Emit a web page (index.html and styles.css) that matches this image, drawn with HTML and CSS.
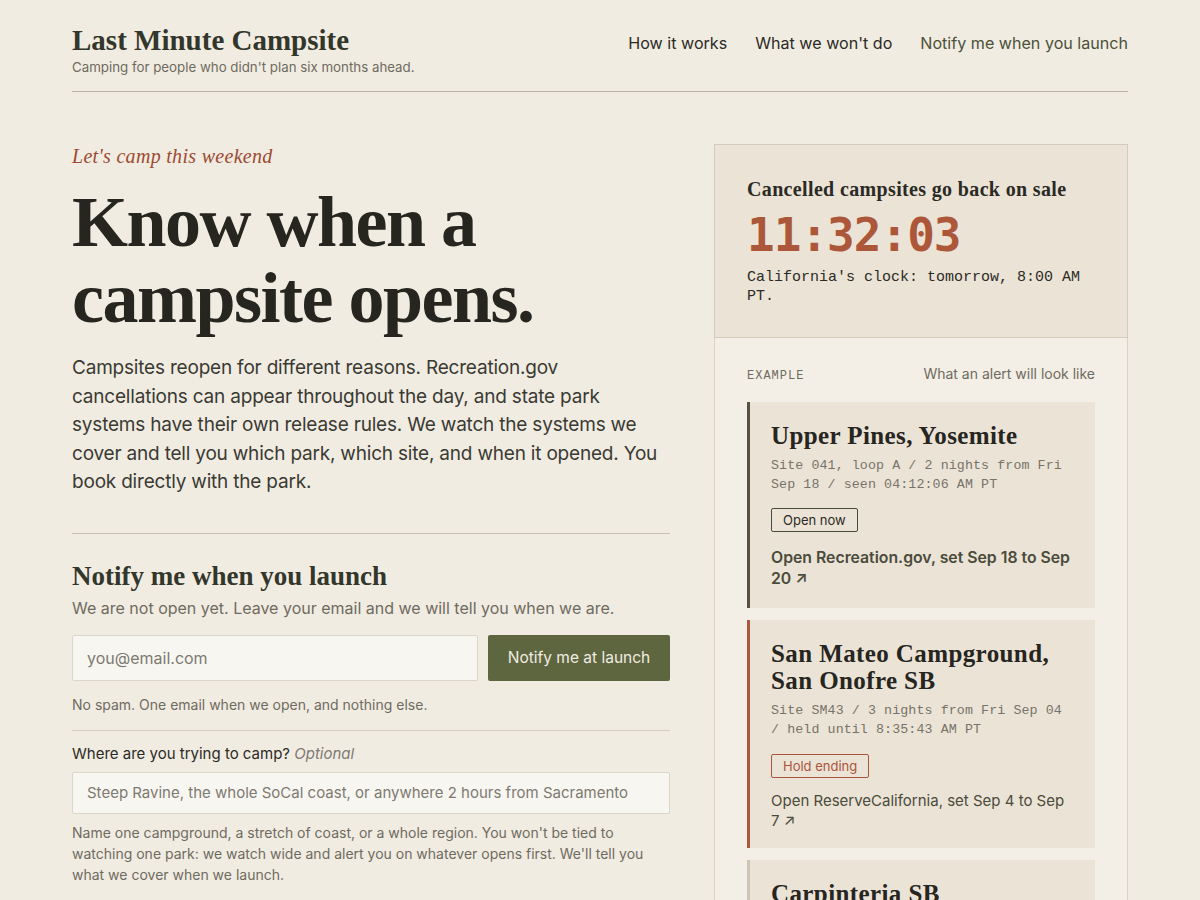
FILE: index.html
```html
<!DOCTYPE html>
<html lang="en">
<head>
<meta charset="utf-8">
<title>Last Minute Campsite</title>
<link rel="stylesheet" href="styles.css">
</head>
<body>
<div class="page">
  <header class="site-header">
    <div class="brand">
      <div class="brand-name">Last Minute Campsite</div>
      <div class="brand-tag">Camping for people who didn't plan six months ahead.</div>
    </div>
    <nav class="nav">
      <a href="#">How it works</a>
      <a href="#">What we won't do</a>
      <a href="#" class="nav-accent">Notify me when you launch</a>
    </nav>
  </header>

  <main class="main">
    <section class="left">
      <div class="eyebrow">Let's camp this weekend</div>
      <h1 class="headline">Know when a campsite opens.</h1>
      <p class="lede">Campsites reopen for different reasons. Recreation.gov cancellations can appear throughout the day, and state park systems have their own release rules. We watch the systems we cover and tell you which park, which site, and when it opened. You book directly with the park.</p>

      <div class="notify">
        <h2 class="notify-title">Notify me when you launch</h2>
        <p class="notify-sub">We are not open yet. Leave your email and we will tell you when we are.</p>
        <div class="email-row">
          <input class="email-input" type="text" placeholder="you@email.com">
          <button class="email-btn">Notify me at launch</button>
        </div>
        <p class="fine">No spam. One email when we open, and nothing else.</p>
        <div class="where">
          <label class="where-label">Where are you trying to camp? <em>Optional</em></label>
          <input class="where-input" type="text" placeholder="Steep Ravine, the whole SoCal coast, or anywhere 2 hours from Sacramento">
          <p class="fine help">Name one campground, a stretch of coast, or a whole region. You won't be tied to watching one park: we watch wide and alert you on whatever opens first. We'll tell you what we cover when we launch.</p>
        </div>
      </div>
    </section>

    <aside class="right">
      <div class="clock-box">
        <div class="clock-title">Cancelled campsites go back on sale</div>
        <div class="clock">11:32:03</div>
        <div class="clock-note">California's clock: tomorrow, 8:00 AM PT.</div>
      </div>
      <div class="example">
        <div class="example-head">
          <span class="example-label">EXAMPLE</span>
          <span class="example-desc">What an alert will look like</span>
        </div>
        <div class="card card-open">
          <div class="card-title">Upper Pines, Yosemite</div>
          <div class="card-meta">Site 041, loop A / 2 nights from Fri Sep 18 / seen 04:12:06 AM PT</div>
          <span class="badge">Open now</span>
          <div class="card-link strong">Open Recreation.gov, set Sep 18 to Sep 20 ↗</div>
        </div>
        <div class="card card-hold">
          <div class="card-title">San Mateo Campground, San Onofre SB</div>
          <div class="card-meta">Site SM43 / 3 nights from Fri Sep 04 / held until 8:35:43 AM PT</div>
          <span class="badge badge-hold">Hold ending</span>
          <div class="card-link">Open ReserveCalifornia, set Sep 4 to Sep 7 ↗</div>
        </div>
        <div class="card card-muted">
          <div class="card-title">Carpinteria SB</div>
          <div class="card-meta">Site 12 / 1 night from Sat Sep 12</div>
        </div>
      </div>
    </aside>
  </main>
</div>
</body>
</html>
```

FILE: styles.css
```css
* { box-sizing: border-box; }
html, body { margin: 0; padding: 0; }
body {
  background: #f1ece2;
  color: #2b2a25;
  font-family: Inter, "Liberation Sans", sans-serif;
  overflow: hidden;
}
.page {
  width: 1056px;
  margin: 0 auto;
}
.site-header {
  display: flex;
  justify-content: space-between;
  align-items: flex-start;
  padding-top: 24px;
  padding-bottom: 15px;
  border-bottom: 1px solid #b9b3a6;
}
.brand-name {
  font-family: "Liberation Serif", "DejaVu Serif", serif;
  font-weight: 700;
  font-size: 29px;
  line-height: 32px;
  color: #33362a;
}
.brand-tag {
  font-size: 13.3px;
  line-height: 18px;
  color: #6e6b60;
  margin-top: 2px;
}
.nav {
  display: flex;
  gap: 28px;
  padding-top: 9px;
}
.nav a {
  color: #2b2a25;
  text-decoration: none;
  font-size: 16.1px;
  line-height: 20px;
}
.nav a.nav-accent { color: #4b5038; }

.main {
  display: flex;
  gap: 44px;
  padding-top: 52px;
  align-items: flex-start;
}
.left { width: 598px; flex: none; }
.right {
  width: 414px;
  flex: none;
}
.eyebrow {
  font-family: "Liberation Serif", serif;
  font-style: italic;
  font-size: 20px;
  line-height: 24px;
  letter-spacing: 0.3px;
  color: #9c4a31;
}
.headline {
  font-family: "Liberation Serif", "DejaVu Serif", serif;
  font-weight: 700;
  font-size: 72px;
  line-height: 76px;
  letter-spacing: -1.5px;
  color: #26251f;
  margin: 16px 0 18px;
}
.lede {
  font-size: 19px;
  line-height: 28.6px;
  color: #3a3a33;
  margin: 0;
  padding-bottom: 36px;
  border-bottom: 1px solid #c7c1b4;
  letter-spacing: -0.2px;
}
.notify { padding-top: 27px; }
.notify-title {
  font-family: "Liberation Serif", serif;
  font-weight: 700;
  font-size: 27px;
  line-height: 30px;
  color: #33362a;
  margin: 0;
}
.notify-sub {
  font-size: 16px;
  line-height: 22px;
  color: #6e6b60;
  margin: 6px 0 16px;
}
.email-row {
  display: flex;
  gap: 10px;
}
.email-input {
  flex: 1;
  height: 46px;
  border: 1px solid #dcd6ca;
  background: #f8f6f1;
  padding: 0 14px;
  font-family: inherit;
  font-size: 16px;
  color: #2b2a25;
  border-radius: 2px;
}
.email-input::placeholder, .where-input::placeholder { color: #7d7a72; }
.email-btn {
  width: 182px;
  height: 46px;
  border: none;
  border-radius: 2px;
  background: #5e6640;
  color: #f1ece2;
  font-family: inherit;
  font-size: 15.5px;
}
.fine {
  font-size: 14px;
  line-height: 21px;
  color: #6e6b60;
  margin: 13px 0 0;
}
.where {
  margin-top: 15px;
  border-top: 1px solid #d3cdc1;
  padding-top: 13px;
}
.where-label {
  display: block;
  font-size: 15px;
  line-height: 20px;
  color: #2b2a25;
}
.where-label em { color: #7d7a72; }
.where-input {
  display: block;
  width: 100%;
  height: 42px;
  margin-top: 8px;
  border: 1px solid #dcd6ca;
  background: #f8f6f1;
  padding: 0 14px;
  font-family: inherit;
  font-size: 15px;
  border-radius: 2px;
}
.help { margin-top: 8px; }

.clock-box {
  background: #ebe3d5;
  border: 1px solid #d3cbbd;
  padding: 32px 32px 31px;
}
.clock-title {
  font-family: "Liberation Serif", serif;
  font-weight: 700;
  font-size: 20px;
  line-height: 24px;
  letter-spacing: 0.35px;
  color: #2b2a25;
}
.clock {
  font-family: "DejaVu Sans Mono", "Liberation Mono", monospace;
  font-weight: 700;
  font-size: 46px;
  line-height: 56px;
  color: #ad573a;
  margin-top: 6px;
  letter-spacing: -1px;
}
.clock-note {
  font-family: "Liberation Mono", monospace;
  font-size: 15px;
  line-height: 19px;
  color: #2b2a25;
  margin-top: 5px;
}
.example {
  background: #f3efe6;
  border: 1px solid #d9d2c5;
  border-top: none;
  padding: 27px 32px 0;
  height: 600px;
}
.example-head {
  display: flex;
  justify-content: space-between;
  align-items: baseline;
  margin-bottom: 19px;
}
.example-label {
  font-family: "Liberation Mono", monospace;
  font-size: 12px;
  letter-spacing: 1px;
  color: #6e6b60;
}
.example-desc {
  font-size: 14px;
  color: #6e6b60;
}
.card {
  background: #ebe3d5;
  border-left: 3px solid #57513f;
  padding: 20px 22px 19px 21px;
  margin-bottom: 12px;
}
.card-hold { border-left-color: #a65a3b; padding-bottom: 17px; }
.card-hold .badge { margin-top: 15px; }
.card-hold .card-link { margin-top: 13px; line-height: 20px; }
.card-muted { border-left-color: #cdc4b4; }
.card-title {
  font-family: "Liberation Serif", serif;
  font-weight: 700;
  font-size: 25px;
  line-height: 27px;
  letter-spacing: 0.4px;
  color: #26251f;
}
.card-meta {
  font-family: "Liberation Mono", monospace;
  font-size: 13.3px;
  line-height: 19px;
  letter-spacing: 0.1px;
  color: #77736a;
  margin-top: 7px;
}
.badge {
  display: inline-block;
  margin-top: 14px;
  border: 1px solid #4a4a40;
  border-radius: 2px;
  font-size: 13px;
  line-height: 22px;
  padding: 0 11px;
  color: #2b2a25;
}
.badge-hold { border-color: #a9553b; color: #a9553b; }
.card-link {
  font-size: 15px;
  line-height: 21px;
  color: #4a4b3c;
  margin-top: 15px;
  font-weight: 400;
}
.card-link.strong { font-weight: 600; font-size: 15.8px; }
```
